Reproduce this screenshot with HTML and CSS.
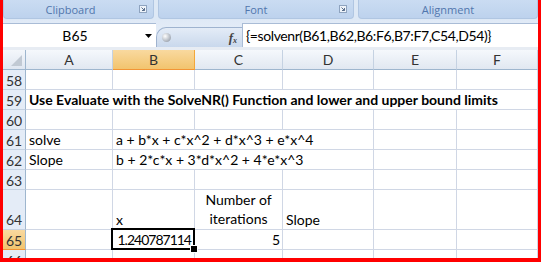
FILE: index.html
```html
<!DOCTYPE html>
<html>
<head>
<meta charset="utf-8">
<link rel="stylesheet" href="styles.css">
</head>
<body>
<div class="frame">
  <div class="ribbon">
    <div class="group g-clip"><span>Clipboard</span>
      <svg class="launcher" width="8" height="8" viewBox="0 0 8 8"><rect x="0.5" y="0.5" width="7" height="7" fill="#eef3f9" stroke="#8ea3bf"/><path d="M2.5 2.5 L5.5 5.5 M5.5 3 V5.5 H3" stroke="#5a6f8c" fill="none"/></svg>
    </div>
    <div class="group g-font"><span>Font</span>
      <svg class="launcher" width="8" height="8" viewBox="0 0 8 8"><rect x="0.5" y="0.5" width="7" height="7" fill="#eef3f9" stroke="#8ea3bf"/><path d="M2.5 2.5 L5.5 5.5 M5.5 3 V5.5 H3" stroke="#5a6f8c" fill="none"/></svg>
    </div>
    <div class="group g-align"><span>Alignment</span></div>
  </div>
  <div class="fbar">
    <div class="namebox"><span class="ref">B65</span><svg class="drop" width="7" height="4" viewBox="0 0 7 4"><path d="M0 0 H7 L3.5 4 Z" fill="#000"/></svg></div>
    <div class="pill"><span class="knob"></span><span class="fx"><i>f</i><sub>x</sub></span></div>
    <div class="formula">{=solvenr(B61,B62,B6:F6,B7:F7,C54,D54)}</div>
  </div>
  <div class="band"></div>
  <div class="sheet">
    <div class="corner"><span class="tri"></span></div>
    <div class="ch">A</div><div class="ch ch-sel">B</div><div class="ch">C</div><div class="ch">D</div><div class="ch">E</div><div class="ch">F</div>

    <div class="rh">58</div><div class="c"></div><div class="c"></div><div class="c"></div><div class="c"></div><div class="c"></div><div class="c"></div>

    <div class="rh">59</div><div class="c span6 bold">Use Evaluate with the SolveNR() Function and lower and upper bound limits</div>

    <div class="rh">60</div><div class="c"></div><div class="c"></div><div class="c"></div><div class="c"></div><div class="c"></div><div class="c"></div>

    <div class="rh">61</div><div class="c">solve</div><div class="c span3">a + b*x + c*x^2 + d*x^3 + e*x^4</div><div class="c"></div><div class="c"></div>

    <div class="rh">62</div><div class="c">Slope</div><div class="c span3">b + 2*c*x + 3*d*x^2 + 4*e*x^3</div><div class="c"></div><div class="c"></div>

    <div class="rh">63</div><div class="c"></div><div class="c"></div><div class="c"></div><div class="c"></div><div class="c"></div><div class="c"></div>

    <div class="rh tall">64</div><div class="c"></div><div class="c">x</div><div class="c wrap">Number of iterations</div><div class="c">Slope</div><div class="c"></div><div class="c"></div>

    <div class="rh rh-sel">65</div><div class="c"></div><div class="c num sel">1.240787114</div><div class="c num">5</div><div class="c"></div><div class="c"></div><div class="c"></div>

    <div class="rh">66</div><div class="c"></div><div class="c"></div><div class="c"></div><div class="c"></div><div class="c"></div><div class="c"></div>
  </div>
</div>
</body>
</html>
```

FILE: styles.css
```css
* { box-sizing: border-box; margin: 0; padding: 0; }
body { margin: 0; background: #fff; font-family: Lato, "Liberation Sans", sans-serif; }

.frame {
  width: 541px;
  height: 262px;
  border-style: solid;
  border-color: #ff0000;
  border-width: 0 3px 4px 3px;
  overflow: hidden;
  background: #fff;
}

/* ribbon group labels */
.ribbon {
  display: flex;
  gap: 4px;
  height: 20px;
  background: #dde8f5;
  padding-bottom: 1px;
}
.group {
  position: relative;
  display: flex;
  align-items: center;
  justify-content: center;
  background: linear-gradient(#cadcf2, #bdd2ed);
  border: 1px solid #b0c6e2;
  border-top: none;
  border-radius: 0 0 4px 4px;
  font-family: "Open Sans", sans-serif;
  font-size: 11px;
  color: #5176ad;
}
.g-clip { width: 151px; padding-right: 16px; }
.g-font { width: 196px; }
.g-align { flex: 1; }
.launcher { position: absolute; right: 6px; top: 5px; }

/* formula bar */
.fbar {
  display: flex;
  height: 27px;
  padding-top: 3px;
  background: linear-gradient(#dfe9f6, #eef3fa);
}
.namebox {
  width: 153px;
  display: flex;
  align-items: center;
  background: #fff;
  border-top: 1px solid #a9bcd6;
}
.ref { flex: 1; text-align: center; font-size: 14px; padding-left: 2px; }
.drop { margin: 1px 4px 0 0; }
.pill {
  width: 86px;
  margin-top: 4px;
  display: flex;
  align-items: center;
  justify-content: space-between;
  padding: 0 4px 0 5px;
  background: linear-gradient(#e4ecf7, #c9d8ec);
  border: 1px solid #9fb3cf;
  border-right: none;
  border-bottom: none;
  border-radius: 10px 0 0 0;
}
.knob {
  width: 9px;
  height: 9px;
  border-radius: 50%;
  background: radial-gradient(circle at 35% 35%, #ffffff, #a6adb7 70%, #8a929d);
}
.fx {
  font-family: "Liberation Serif", serif;
  font-size: 13px;
  color: #444;
  font-weight: bold;
  margin-right: 1px;
}
.fx sub { font-size: 8px; vertical-align: -1px; font-style: italic; }
.formula {
  flex: 1;
  background: #fff;
  border-top: 1px solid #a9bcd6;
  border-left: 1px solid #a9bcd6;
  padding: 3px 0 0 3px;
  font-size: 14px;
  letter-spacing: -0.4px;
  white-space: nowrap;
}
.band { height: 3px; background: #e7ecf3; }

/* sheet */
.sheet {
  display: grid;
  grid-template-columns: 23px 87px 82px 88px 91px 83px 81px;
  grid-template-rows: 20px 20px 20px 20px 20px 20px 20px 40px 20px 20px;
  font-size: 14px;
  color: #000;
}
.corner {
  position: relative;
  background: linear-gradient(#f4f7fb, #dfe6f0);
  border-right: 1px solid #9eb6ce;
  border-bottom: 1px solid #9eb6ce;
}
.tri {
  position: absolute;
  right: 3px;
  bottom: 3px;
  width: 0;
  height: 0;
  border-left: 11px solid transparent;
  border-bottom: 11px solid #c1c9d3;
}
.ch {
  display: flex;
  align-items: center;
  justify-content: center;
  background: linear-gradient(#f5f8fc, #e1e8f1);
  border-right: 1px solid #c5d2e2;
  border-bottom: 1px solid #9eb6ce;
  color: #333;
}
.ch-sel {
  background: linear-gradient(#f9d99f, #f2c46e);
  border-right-color: #f2a73b;
  border-bottom-color: #f29536;
}
.rh {
  display: flex;
  align-items: center;
  justify-content: center;
  background: #e4ecf7;
  border-right: 1px solid #9eb6ce;
  border-bottom: 1px solid #c5d2e2;
  color: #333;
  padding-top: 1px;
}
.rh.tall { align-items: flex-end; padding-bottom: 1px; }
.rh-sel { background: linear-gradient(#f9d99f, #f2c46e); border-bottom-color: #f29536; }

.c {
  display: flex;
  align-items: flex-end;
  padding: 0 3px 1px 3px;
  line-height: 17px;
  border-right: 1px solid #d0d7e5;
  border-bottom: 1px solid #d0d7e5;
  white-space: nowrap;
}
.span6 { grid-column: span 6; }
.span3 { grid-column: span 3; }
.bold { font-weight: bold; }
.wrap {
  white-space: normal;
  justify-content: center;
  text-align: center;
  line-height: 19px;
  padding-bottom: 1px;
}
.num { justify-content: flex-end; letter-spacing: -1px; }
.sel { position: relative; }
.sel::after {
  content: "";
  position: absolute;
  left: -2px;
  top: -2px;
  right: -1px;
  bottom: -1px;
  border: 2px solid #000;
}
.sel::before {
  content: "";
  position: absolute;
  right: -4px;
  bottom: -4px;
  width: 6px;
  height: 6px;
  background: #000;
  border: 1px solid #fff;
  z-index: 1;
}
```
